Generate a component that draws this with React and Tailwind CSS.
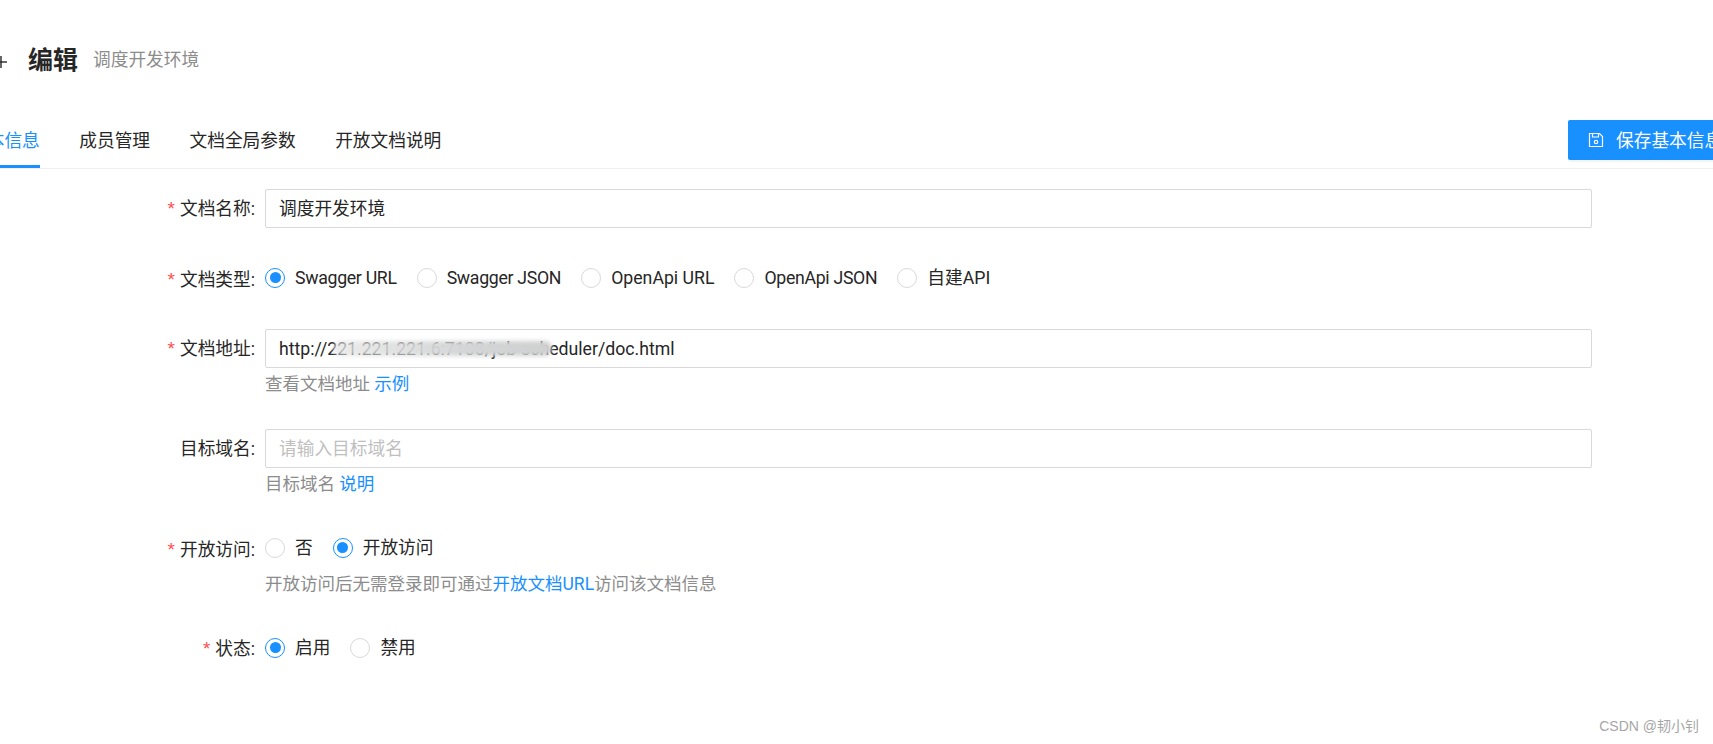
const baseFont = "font-['Roboto','Noto_Sans_CJK_SC',sans-serif]";

function SaveIcon() {
  return (
    <svg width="16" height="16" viewBox="0 0 16 16" fill="none" stroke="currentColor" strokeWidth="1.2">
      <path d="M1.5 1.5h10l3 3v10h-13z" />
      <path d="M4.5 1.5v3.5h6v-3.5" />
      <circle cx="8" cy="10" r="1.7" />
    </svg>
  );
}

// back arrow, mostly scrolled off the left of the page
function BackArrow() {
  return (
    <svg className="-ml-[15px] mr-[21px] mt-[2px] shrink-0" width="22" height="22" viewBox="0 0 22 22" fill="none" stroke="#262626" strokeWidth="1.4">
      <path d="M2 11h20" />
      <path d="M16 5v12" />
    </svg>
  );
}

function Radio({ label, checked, tight }) {
  return (
    <label className="flex items-center mr-5">
      <span
        className={`w-5 h-5 rounded-full border bg-white flex items-center justify-center ${
          checked ? "border-[#1890ff]" : "border-[#d9d9d9]"
        }`}
      >
        {checked && <span className="w-[11px] h-[11px] rounded-full bg-[#1890ff]" />}
      </span>
      <span className={`ml-[10px] ${tight ? "tracking-[-0.3px]" : ""}`}>{label}</span>
    </label>
  );
}

function Row({ label, required, children, className = "" }) {
  return (
    <div className={`flex ${className}`}>
      <div className="w-[255px] shrink-0 flex justify-end items-center h-[39px] mr-[10px]">
        {required && (
          <span className="text-[#ff4d4f] text-[19px] mr-[3px] mt-[3px] font-['Liberation_Mono',monospace]">*</span>
        )}
        <span>{label}:</span>
      </div>
      <div className="w-[1327px] shrink-0">{children}</div>
    </div>
  );
}

function TextInput({ value, placeholder }) {
  return (
    <div className="h-[39px] border border-[#d9d9d9] rounded-[2px] px-[13px] flex items-center bg-white">
      {value ? <span>{value}</span> : <span className="text-[#bfbfbf]">{placeholder}</span>}
    </div>
  );
}

export default function App() {
  const tabs = ["基本信息", "成员管理", "文档全局参数", "开放文档说明"];

  return (
    <div className={`w-[1713px] h-[744px] overflow-hidden relative bg-white text-[17.7px] leading-[26px] text-[#262626] ${baseFont}`}>
      {/* header */}
      <div className="flex items-center h-[38px] mt-[42px]">
        <BackArrow />
        <span className="text-[25px] font-bold mr-[15px]">编辑</span>
        <span className="text-[#8c8c8c] -mt-[2px]">调度开发环境</span>
      </div>

      {/* tabs */}
      <div className="mt-[31px] h-[58px] border-b border-[#f0f0f0] flex items-start -ml-[31px] w-[1744px]">
        {tabs.map((t, i) => (
          <div
            key={t}
            className={`h-[57px] mr-[39.5px] pt-[6px] flex items-center border-b-[3px] ${
              i === 0 ? "text-[#1890ff] border-[#1890ff]" : "border-transparent"
            }`}
          >
            {t}
          </div>
        ))}
        <button className="ml-auto mt-[9px] -mr-[50px] w-[195px] h-[40px] bg-[#1890ff] text-white rounded-[2px] shadow-[0_2px_0_rgba(0,0,0,0.045)] flex items-center pl-[20px] whitespace-nowrap">
          <SaveIcon />
          <span className="ml-[12px] mt-px">保存基本信息</span>
        </button>
      </div>

      {/* form */}
      <div className="mt-[20px]">
        <Row label="文档名称" required>
          <TextInput value="调度开发环境" />
        </Row>

        <Row label="文档类型" required className="mt-[32px]">
          <div className="flex items-center h-[39px] -mt-[2px]">
            <Radio label="Swagger URL" checked tight />
            <Radio label="Swagger JSON" tight />
            <Radio label="OpenApi URL" />
            <Radio label="OpenApi JSON" tight />
            <Radio label="自建API" />
          </div>
        </Row>

        <Row label="文档地址" required className="mt-[30px]">
          <div className="relative">
            <TextInput value="http://221.221.221.6:7100/job-scheduler/doc.html" />
            <div className="absolute left-[68px] top-[12px] w-[219px] h-[15px] bg-gradient-to-r from-[#e6e6e6]/75 via-[#d4d5d6] via-60% to-[#cfd0d0] rounded-full blur-[2px]" />
          </div>
          <div className="text-[#8c8c8c] text-[17.5px] mt-[3px]">
            查看文档地址 <span className="text-[#1890ff]">示例</span>
          </div>
        </Row>

        <Row label="目标域名" className="mt-[32px]">
          <TextInput placeholder="请输入目标域名" />
          <div className="text-[#8c8c8c] text-[17.5px] mt-[3px]">
            目标域名 <span className="text-[#1890ff]">说明</span>
          </div>
        </Row>

        <Row label="开放访问" required className="mt-[33px]">
          <div className="flex items-center h-[39px] -mt-[2px]">
            <Radio label="否" />
            <Radio label="开放访问" checked />
          </div>
          <div className="text-[#8c8c8c] text-[17.5px] mt-1">
            开放访问后无需登录即可通过<span className="text-[#1890ff]">开放文档URL</span>访问该文档信息
          </div>
        </Row>

        <Row label="状态" required className="mt-[32px]">
          <div className="flex items-center h-[39px] -mt-[1px]">
            <Radio label="启用" checked />
            <Radio label="禁用" />
          </div>
        </Row>
      </div>

      {/* watermark */}
      <div className="absolute right-[14px] bottom-[8px] text-[14px] leading-[20px] text-[#a6a6a6] font-['Liberation_Sans','Noto_Sans_CJK_SC',sans-serif]">
        CSDN @韧小钊
      </div>
    </div>
  );
}
